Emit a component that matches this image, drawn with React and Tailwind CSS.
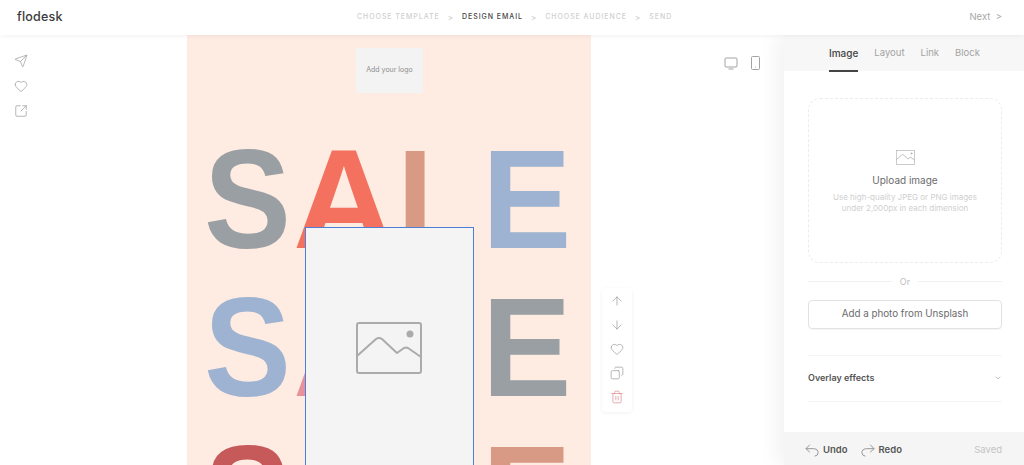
import { ArrowUp, ArrowDown, Heart, Copy, Trash2, ChevronDown, Send, SquareArrowOutUpRight } from 'lucide-react';

const steps = [
  { label: 'CHOOSE TEMPLATE' },
  { label: 'DESIGN EMAIL', active: true },
  { label: 'CHOOSE AUDIENCE' },
  { label: 'SEND' },
];

const saleRows = [
  ['text-[#9a9fa3]', 'text-[#f4715f]', 'text-[#d89a85]', 'text-[#9db3d1]'],
  ['text-[#9db3d1]', 'text-[#e9919b]', 'text-[#d89a85]', 'text-[#9a9fa3]'],
  ['text-[#c65a5a]', 'text-[#f4715f]', 'text-[#d89a85]', 'text-[#d89a85]'],
];

// reference letters are a bit taller and narrower than Liberation Sans Bold
const saleLetters = [
  { letter: 'S', width: 'scale-x-[0.925]' },
  { letter: 'A', width: 'scale-x-100' },
  { letter: 'L', width: 'scale-x-[0.925]' },
  { letter: 'E', width: 'scale-x-[0.95]' },
];

const ImageIcon = ({ className, stroke = '#ababab', strokeWidth = 2 }) => (
  <svg viewBox="0 0 66 52" className={className} fill="none" stroke={stroke} strokeWidth={strokeWidth} strokeLinejoin="round" strokeLinecap="round">
    <rect x="1" y="1" width="64" height="50" rx="2" />
    <path d="M1 34 L20 17 Q23 15 26 17 L41 31 L48 26 Q50 25 52 26 L65 35" />
    <circle cx="54" cy="12" r="3.5" fill={stroke} stroke="none" />
  </svg>
);

const UndoIcon = ({ flip }) => (
  <svg viewBox="0 0 16 16" className={`w-[14px] h-[14px] ${flip ? '-scale-x-100' : ''}`} fill="none" stroke="#8a8a8a" strokeWidth="1">
    <path d="M5.5 2 L1 6.5 L5.5 10.5 M1 6.5 H10 Q15 7 15 11 Q15 14.5 11 15" />
  </svg>
);

const DesktopIcon = () => (
  <svg viewBox="0 0 14 13" className="w-[14px] h-[13px]" fill="none" stroke="#a3a3a3" strokeWidth="1">
    <rect x="1" y="1" width="12" height="9" rx="1" />
    <path d="M4.5 12 H9.5" />
  </svg>
);

const PhoneIcon = () => (
  <svg viewBox="0 0 9 14" className="w-[9px] h-[14px]" fill="none" stroke="#a3a3a3" strokeWidth="1">
    <rect x="0.5" y="0.5" width="8" height="13" rx="1" />
    <circle cx="4.5" cy="11" r="0.5" fill="#a3a3a3" stroke="none" />
  </svg>
);

const Header = () => (
  <header className="relative z-20 h-[35px] shrink-0 flex items-center bg-white shadow-[0_1px_5px_rgba(0,0,0,0.06)]">
    <div className="w-[357px] pl-[17px] text-[12.5px] font-medium text-[#3a3a3a] tracking-[0.2px]">flodesk</div>
    <nav className="flex items-center text-[7px] tracking-[0.95px] font-medium text-[#cfcfcf]">
      {steps.map((step, i) => (
        <div key={step.label} className="flex items-center">
          <span className={step.active ? 'text-[#444444]' : ''}>{step.label}</span>
          {i < steps.length - 1 && <span className="mx-[8px] text-[8px]">&gt;</span>}
        </div>
      ))}
    </nav>
    <div className="ml-auto pr-[22px] text-[9.5px] text-[#a8a8a8]">Next &nbsp;&gt;</div>
  </header>
);

const LeftRail = () => (
  <aside className="w-[187px] shrink-0 pl-[14px] pt-[19px] flex flex-col gap-[11px] text-[#999999]">
    <Send size={14} strokeWidth={1.2} />
    <Heart size={14} strokeWidth={1.2} />
    <SquareArrowOutUpRight size={14} strokeWidth={1.2} />
  </aside>
);

const Canvas = () => (
  <main className="relative w-[404px] shrink-0 bg-[#feebe1] overflow-hidden">
    <div className="flex justify-center pl-[1px] pt-[13px]">
      <div className="w-[67px] h-[45px] bg-[#f3f3f3] flex items-center justify-center text-[7px] text-[#8d8d8d]">Add your logo</div>
    </div>
    <div className="mt-[32px] flex flex-col font-['Liberation_Sans',sans-serif] font-bold text-[141px] leading-[148px]">
      {saleRows.map((row, r) => (
        <div key={r} className="grid grid-cols-[89px_104px_85px_90px] pl-[17px]">
          {saleLetters.map(({ letter, width }, i) => (
            <span key={letter} className={`origin-left ${width} ${row[i]}`}>{letter}</span>
          ))}
        </div>
      ))}
    </div>
    {/* selected image block sits over the template */}
    <div className="absolute left-[118px] top-[192px] w-[169px] h-[300px] bg-[#f4f4f4] border border-[#4f7ed8] flex justify-center pt-[94px] pr-[2px]">
      <ImageIcon className="w-[66px] h-[52px]" />
    </div>
  </main>
);

const Gutter = () => (
  <section className="flex-1 flex flex-col">
    <div className="flex justify-end items-center gap-[13px] pr-[24px] pt-[21px]">
      <DesktopIcon />
      <PhoneIcon />
    </div>
    <div className="ml-[11px] mt-[218px] w-[30px] h-[124px] rounded bg-white shadow-[0_1px_4px_rgba(0,0,0,0.06)] flex flex-col items-center pt-[6px] gap-[10px] text-[#999999]">
      <ArrowUp size={14} strokeWidth={1.2} />
      <ArrowDown size={14} strokeWidth={1.2} />
      <Heart size={14} strokeWidth={1.2} />
      <Copy size={14} strokeWidth={1.2} className="-scale-x-100" />
      <Trash2 size={14} strokeWidth={1.2} className="text-[#e08a8a]" />
    </div>
  </section>
);

const SidePanel = () => (
  <aside className="w-[240px] shrink-0 bg-white flex flex-col shadow-[-8px_0_18px_rgba(0,0,0,0.05)] z-10">
    <div className="h-[36px] shrink-0 bg-[#f7f7f7] flex items-start gap-[16px] pl-[45px] pt-[11px] text-[9.5px] text-[#a3a3a3]">
      <div className="relative text-[10px] font-medium text-[#444444]">
        Image
        <div className="absolute left-0 right-0 top-[24px] h-[1.5px] bg-[#444444]" />
      </div>
      <span>Layout</span>
      <span>Link</span>
      <span>Block</span>
    </div>
    <div className="flex-1 pl-[24px] pr-[22px] pt-[27px]">
      <div className="h-[165px] rounded-xl border border-dashed border-[#ececec] flex flex-col items-center pt-[51px]">
        <ImageIcon className="w-[19px] h-[15px]" stroke="#b5b5b5" strokeWidth={3} />
        <div className="mt-[8px] text-[10px] text-[#6b6b6b]">Upload image</div>
        <div className="mt-[4px] text-[8px] leading-[11px] text-[#d0d0d0] text-center">
          Use high-quality JPEG or PNG images<br />under 2,000px in each dimension
        </div>
      </div>
      <div className="mt-[12px] flex items-center gap-[8px] text-[9px] text-[#bdbdbd]">
        <div className="flex-1 h-px bg-[#f0f0f0]" />
        <span>Or</span>
        <div className="flex-1 h-px bg-[#f0f0f0]" />
      </div>
      <button className="mt-[11px] w-full h-[29px] pt-[1px] rounded border border-[#e2e2e2] text-[9.8px] text-[#6b6b6b] shadow-[0_1px_1px_rgba(0,0,0,0.04)]">
        Add a photo from Unsplash
      </button>
      <div className="mt-[26px] h-[47px] border-y border-[#f5f5f5] flex items-center justify-between text-[9px] font-semibold text-[#555555]">
        <span>Overlay effects</span>
        <ChevronDown size={8} strokeWidth={1.5} className="text-[#8a8a8a]" />
      </div>
    </div>
    <div className="h-[33px] shrink-0 bg-[#f5f5f5] flex items-center pt-[3px] pl-[21px] pr-[22px] text-[9.5px] font-semibold text-[#555555]">
      <UndoIcon />
      <span className="ml-[4px]">Undo</span>
      <span className="ml-[13px]"><UndoIcon flip /></span>
      <span className="ml-[4px]">Redo</span>
      <span className="ml-auto font-normal text-[#c4c4c4]">Saved</span>
    </div>
  </aside>
);

export default function App() {
  return (
    <div className="h-screen w-full overflow-hidden flex flex-col bg-white font-['Inter',sans-serif]">
      <Header />
      <div className="flex-1 flex min-h-0">
        <LeftRail />
        <Canvas />
        <Gutter />
        <SidePanel />
      </div>
    </div>
  );
}
